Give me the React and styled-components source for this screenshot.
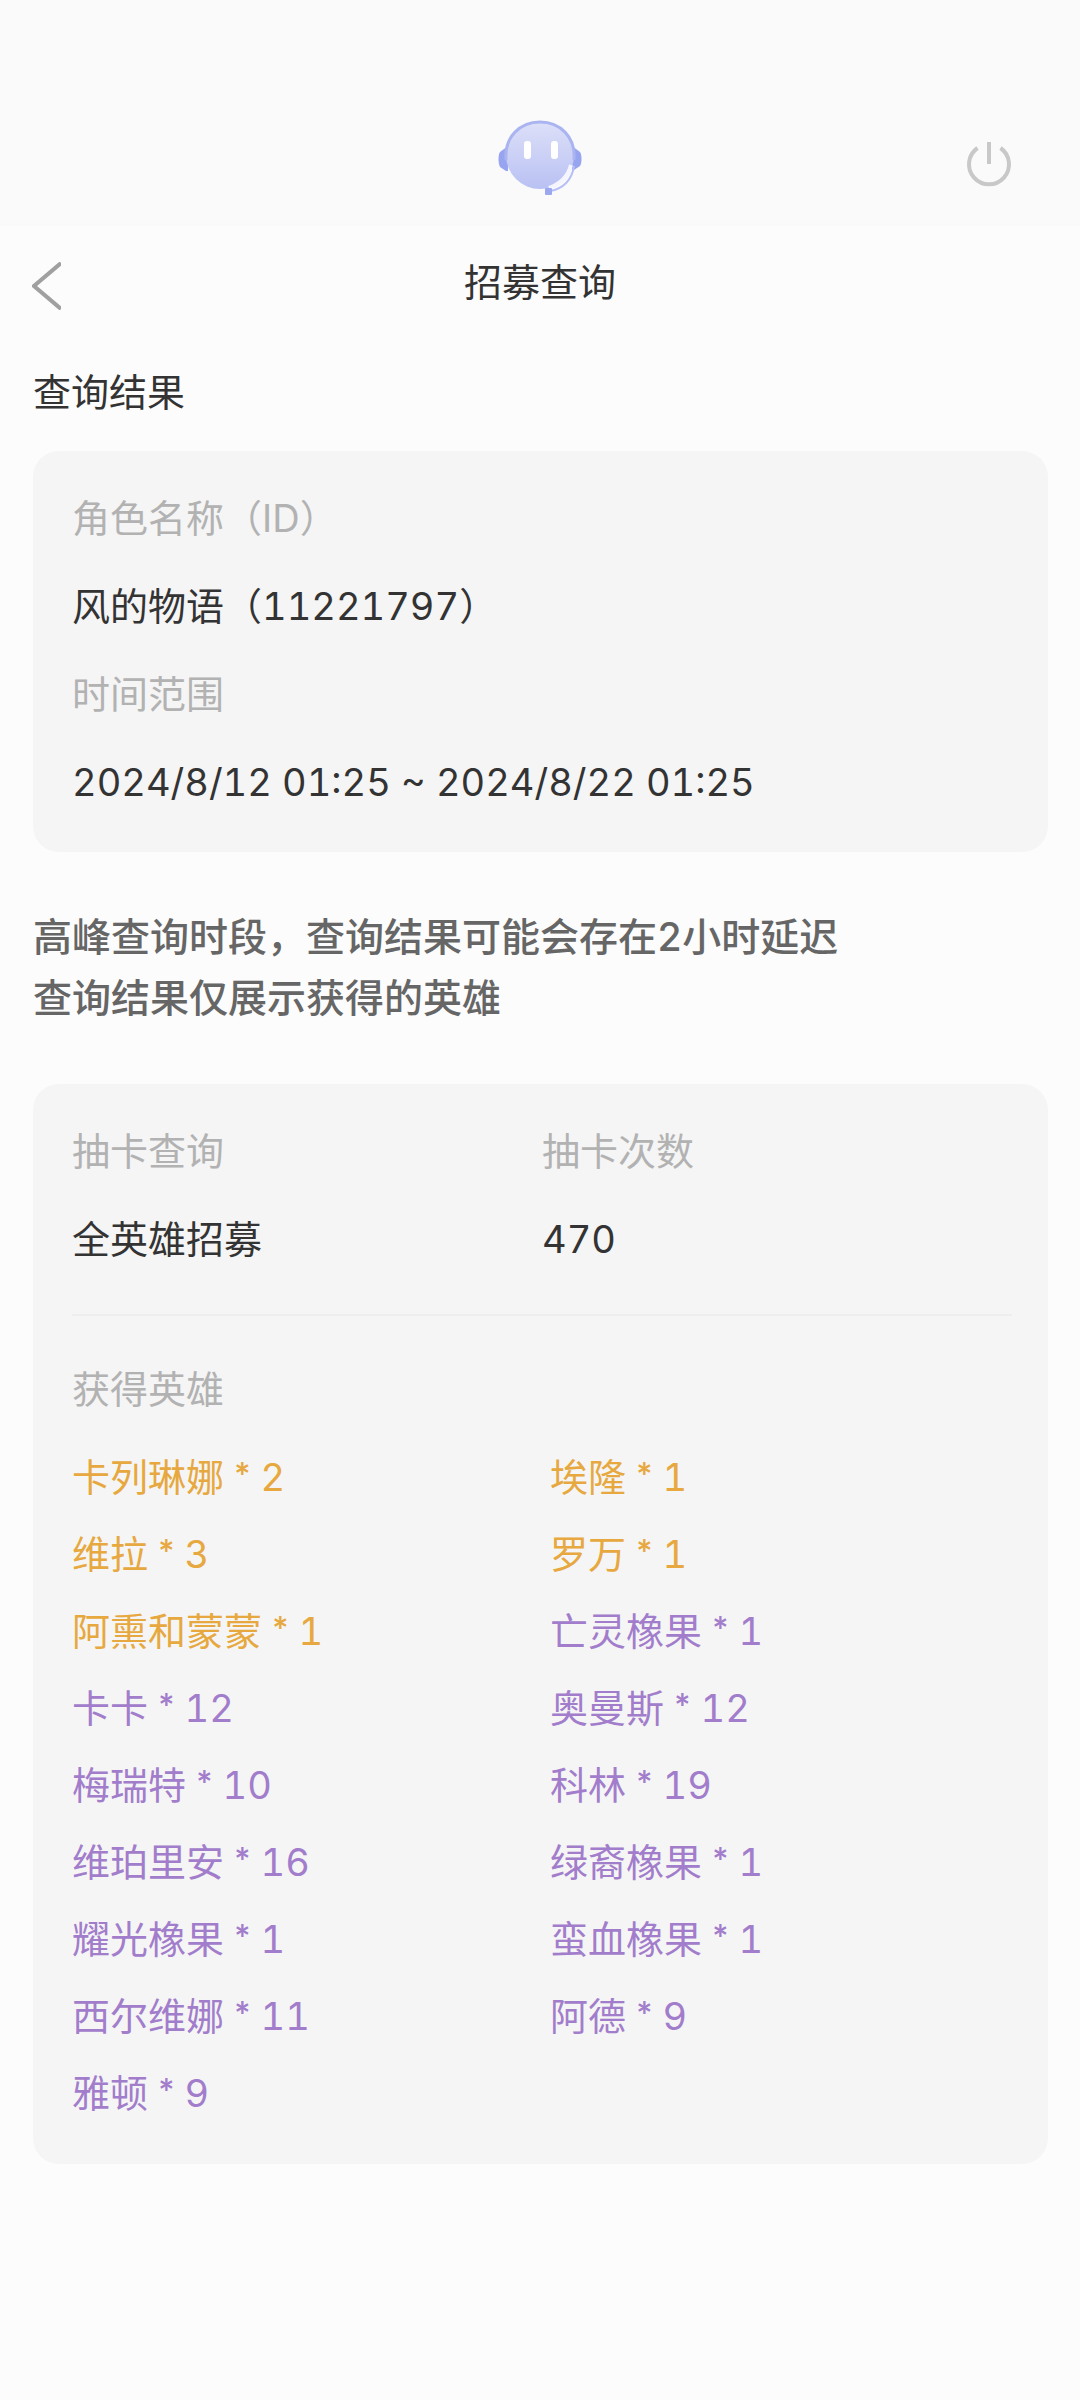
import React from "react";
import styled, { createGlobalStyle } from "styled-components";

const GlobalStyle = createGlobalStyle`
  * {
    box-sizing: border-box;
  }

  body {
    margin: 0;
    background-color: #fcfcfc;
    color: #333333;
    font-family: Inter, "Noto Sans CJK SC", sans-serif;
    font-size: 38px;
    font-variant-numeric: tabular-nums;
  }
`;

const TopBar = styled.header`
  display: grid;
  grid-template-columns: 1fr auto 1fr;
  align-items: start;
  height: 226px;
  padding: 118px 65px 0;
  background-color: #fafafa;
`;

const IconButton = styled.button`
  display: block;
  padding: 0;
  border: none;
  background: none;
  cursor: pointer;

  svg {
    display: block;
  }
`;

const ServiceButton = styled(IconButton)`
  grid-column: 2;
`;

const PowerButton = styled(IconButton)`
  justify-self: end;
  margin-top: 20px;
`;

const BackButton = styled(IconButton)`
  padding-top: 8px;
`;

const TitleBar = styled.div`
  display: grid;
  grid-template-columns: 1fr auto 1fr;
  align-items: center;
  height: 112px;
  padding: 0 32px;
`;

const Title = styled.h1`
  margin: 0;
  font-size: 38px;
  font-weight: 400;
  line-height: 60px;
`;

const Content = styled.main`
  padding: 24px 32px 32px 33px;
`;

const SectionTitle = styled.h2`
  margin: 0 0 29px;
  font-size: 38px;
  font-weight: 400;
  line-height: 60px;
`;

const Card = styled.section`
  padding: 23px 36px 26px 39px;
  border-radius: 26px;
  background-color: #f5f5f5;
`;

const Fields = styled.dl`
  display: grid;
  grid-template-columns: repeat(${(props) => props.$columns || 1}, 1fr);
  margin: 0;
`;

const Label = styled.dt`
  color: #b2b2b2;
  line-height: 88px;
`;

const Value = styled.dd`
  margin: 0;
  line-height: 88px;
`;

const Notice = styled.p`
  margin: 54px 0 56px;
  color: #666666;
  font-size: 39px;
  font-weight: 500;
  line-height: 61px;
`;

const Divider = styled.hr`
  height: 2px;
  margin: 31px 0 29px;
  border: none;
  background-color: #eeeeee;
`;

const ListTitle = styled.h3`
  margin: 0 0 6px;
  color: #b2b2b2;
  font-size: 38px;
  font-weight: 400;
  line-height: 88px;
`;

const HeroList = styled.ul`
  display: grid;
  grid-template-columns: 1fr 1fr;
  column-gap: 16px;
  margin: 0;
  padding: 0 0 6px;
  list-style: none;
`;

const Hero = styled.li`
  color: ${(props) => (props.$rare ? "#e6a83f" : "#a27dcb")};
  line-height: 77px;
`;

const Star = styled.span`
  font-family: Lato, sans-serif;
  font-weight: 700;
  line-height: 1;
`;

const heroes = [
  { name: "卡列琳娜", count: 2, rare: true },
  { name: "埃隆", count: 1, rare: true },
  { name: "维拉", count: 3, rare: true },
  { name: "罗万", count: 1, rare: true },
  { name: "阿熏和蒙蒙", count: 1, rare: true },
  { name: "亡灵橡果", count: 1 },
  { name: "卡卡", count: 12 },
  { name: "奥曼斯", count: 12 },
  { name: "梅瑞特", count: 10 },
  { name: "科林", count: 19 },
  { name: "维珀里安", count: 16 },
  { name: "绿裔橡果", count: 1 },
  { name: "耀光橡果", count: 1 },
  { name: "蛮血橡果", count: 1 },
  { name: "西尔维娜", count: 11 },
  { name: "阿德", count: 9 },
  { name: "雅顿", count: 9 },
];

const RobotIcon = () => (
  <svg width="84" height="78" viewBox="0 0 84 78" aria-hidden="true">
    <defs>
      <linearGradient id="face" x1="0" y1="0" x2="0" y2="1">
        <stop offset="0" stopColor="#dde0f8" />
        <stop offset="1" stopColor="#b9c1f3" />
      </linearGradient>
    </defs>
    <path d="M10 28L2 34C0 37 0 45 2 49L8 53H10Z" fill="#97a4f0" />
    <path d="M74 28L82 34C84 37 84 45 82 48L76 52H74Z" fill="#97a4f0" />
    <circle cx="42" cy="37" r="34" fill="url(#face)" />
    <path
      d="M8 42C6 19 22 4 42 4C62 4 78 19 76 42"
      fill="none"
      stroke="#aab4f0"
      strokeWidth="3"
    />
    <path
      d="M73 47C70 59 62 66 51 70"
      fill="none"
      stroke="#f4f5fe"
      strokeWidth="4"
    />
    <path
      d="M76 48C74 62 65 71 52 73"
      fill="none"
      stroke="#b7c0f6"
      strokeWidth="2"
    />
    <rect x="47" y="70" width="7" height="7" rx="1" fill="#9ba8ef" />
    <rect x="26" y="23" width="7" height="18" rx="3" fill="#ffffff" />
    <rect x="53" y="23" width="7" height="18" rx="3" fill="#ffffff" />
  </svg>
);

const PowerIcon = () => (
  <svg
    width="52"
    height="52"
    viewBox="0 0 52 52"
    fill="none"
    stroke="#c8c8c8"
    strokeWidth="4"
    aria-hidden="true"
  >
    <path d="M14.5 10A20 20 0 1 0 37.5 10" />
    <path d="M26 4V26" />
  </svg>
);

const BackIcon = () => (
  <svg
    width="29"
    height="48"
    viewBox="0 0 29 48"
    fill="none"
    stroke="#a0a0a0"
    strokeWidth="4"
    aria-hidden="true"
  >
    <path d="M29 1L2 24L29 47" />
  </svg>
);

const App = () => {
  return (
    <>
      <GlobalStyle />
      <TopBar>
        <ServiceButton type="button" aria-label="客服">
          <RobotIcon />
        </ServiceButton>
        <PowerButton type="button" aria-label="退出">
          <PowerIcon />
        </PowerButton>
      </TopBar>
      <TitleBar>
        <BackButton type="button" aria-label="返回">
          <BackIcon />
        </BackButton>
        <Title>招募查询</Title>
      </TitleBar>
      <Content>
        <SectionTitle>查询结果</SectionTitle>
        <Card>
          <Fields>
            <Label>角色名称（ID）</Label>
            <Value>风的物语（11221797）</Value>
            <Label>时间范围</Label>
            <Value>2024/8/12 01:25 ~ 2024/8/22 01:25</Value>
          </Fields>
        </Card>
        <Notice>
          高峰查询时段，查询结果可能会存在2小时延迟
          <br />
          查询结果仅展示获得的英雄
        </Notice>
        <Card>
          <Fields $columns={2}>
            <div>
              <Label>抽卡查询</Label>
              <Value>全英雄招募</Value>
            </div>
            <div>
              <Label>抽卡次数</Label>
              <Value>470</Value>
            </div>
          </Fields>
          <Divider />
          <ListTitle>获得英雄</ListTitle>
          <HeroList>
            {heroes.map((hero) => (
              <Hero key={hero.name} $rare={hero.rare}>
                {hero.name} <Star>*</Star> {hero.count}
              </Hero>
            ))}
          </HeroList>
        </Card>
      </Content>
    </>
  );
};

export default App;
